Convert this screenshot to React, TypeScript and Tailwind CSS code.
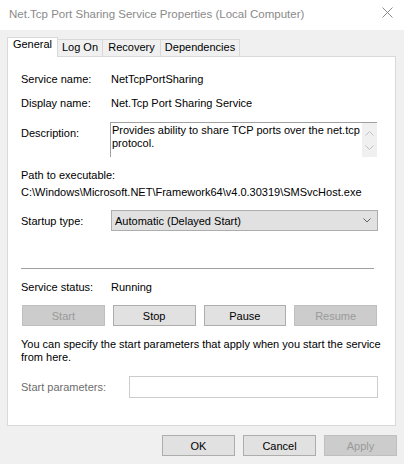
import React from "react";

function Btn({ label, disabled, w }: { label: string; disabled?: boolean; w?: string }) {
  return (
    <div
      className={
        "h-[21px] flex items-center justify-center border leading-[14px] " +
        (w ?? "") +
        " " +
        (disabled ? "bg-[#cccccc] border-[#bfbfbf] text-[#9a9a9a]" : "bg-[#e1e1e1] border-[#adadad] text-black")
      }
    >
      {label}
    </div>
  );
}

export default function App() {
  return (
    <div className="w-[404px] h-[464px] bg-[#f0f0f0] flex flex-col font-['Liberation_Sans',Arial,sans-serif] text-[11px] text-black overflow-hidden">
      {/* title bar */}
      <div className="h-[30px] bg-white flex items-start justify-between shrink-0">
        <span className="pl-[9px] mt-[6px] leading-[16px] text-[11.5px] text-[#8a8a8a] font-['Liberation_Sans',Arial,sans-serif]">
          Net.Tcp Port Sharing Service Properties (Local Computer)
        </span>
        <svg width="11" height="11" viewBox="0 0 11 11" className="mt-[7px] mr-[11px]">
          <path d="M0.5 0.5 L10.5 10.5 M10.5 0.5 L0.5 10.5" stroke="#8a8a8a" strokeWidth="1" fill="none" />
        </svg>
      </div>

      {/* tabs */}
      <div className="h-[26px] flex items-end pl-[7px] shrink-0">
        <div className="relative z-10 -mb-px w-[51px] h-[20px] bg-white border border-b-0 border-[#d9d9d9] text-center leading-[12px]">
          General
        </div>
        <div className="w-[45px] h-[17px] bg-[#f0f0f0] border-t border-r border-[#d9d9d9] text-center leading-[14px]">
          Log On
        </div>
        <div className="w-[58px] h-[17px] bg-[#f0f0f0] border-t border-r border-[#d9d9d9] text-center leading-[14px]">
          Recovery
        </div>
        <div className="w-[79px] h-[17px] bg-[#f0f0f0] border-t border-r border-[#d9d9d9] text-center leading-[14px]">
          Dependencies
        </div>
      </div>

      {/* panel */}
      <div className="ml-[7px] mr-[8px] h-[370px] bg-white border border-[#d9d9d9] flex flex-col pl-[13px] pr-[17px] shrink-0">
        <div className="mt-[15px] h-[14px] flex leading-[14px]">
          <span className="w-[90px]">Service name:</span>
          <span>NetTcpPortSharing</span>
        </div>
        <div className="mt-[10px] h-[14px] flex leading-[14px]">
          <span className="w-[90px]">Display name:</span>
          <span>Net.Tcp Port Sharing Service</span>
        </div>
        <div className="mt-[12px] flex items-start">
          <span className="w-[89px] mt-[4px] leading-[14px]">Description:</span>
          <div className="w-[267px] h-[35px] flex border-t border-l border-[#a0a0a0]">
            <div className="flex-1 pl-[1px] pt-[1px] leading-[13px]">
              Provides ability to share TCP ports over the net.tcp
              <br />
              protocol.
            </div>
            <div className="w-[15px] h-full bg-[#f0f0f0] flex flex-col items-center justify-between pt-[8px] pb-[7px]">
              <svg width="9" height="5" viewBox="0 0 9 5">
                <polyline points="0.5,4.5 4.5,0.5 8.5,4.5" stroke="#c0c0c0" strokeWidth="1" fill="none" />
              </svg>
              <svg width="9" height="5" viewBox="0 0 9 5">
                <polyline points="0.5,0.5 4.5,4.5 8.5,0.5" stroke="#c0c0c0" strokeWidth="1" fill="none" />
              </svg>
            </div>
          </div>
        </div>
        <div className="mt-[11px] h-[14px] leading-[14px]">Path to executable:</div>
        <div className="mt-[3px] h-[14px] leading-[14px] whitespace-nowrap">
          C:\Windows\Microsoft.NET\Framework64\v4.0.30319\SMSvcHost.exe
        </div>
        <div className="mt-[11px] h-[21px] flex items-center">
          <span className="w-[90px] leading-[14px]">Startup type:</span>
          <div className="w-[267px] h-[21px] bg-[#e1e1e1] border border-[#adadad] flex items-center justify-between pl-[3px] pr-[6px]">
            <span className="leading-[14px]">Automatic (Delayed Start)</span>
            <svg width="8" height="5" viewBox="0 0 8 5">
              <polyline points="0.5,0.5 4,4 7.5,0.5" stroke="#606060" strokeWidth="1" fill="none" />
            </svg>
          </div>
        </div>
        <div className="mt-[37px] h-px w-[353px] bg-[#a0a0a0]" />
        <div className="mt-[11px] h-[14px] flex leading-[14px]">
          <span className="w-[90px]">Service status:</span>
          <span>Running</span>
        </div>
        <div className="mt-[11px] ml-[1px] w-[355px] grid grid-cols-4 gap-[8px]">
          <Btn label="Start" disabled />
          <Btn label="Stop" />
          <Btn label="Pause" />
          <Btn label="Resume" disabled />
        </div>
        <div className="mt-[12px] leading-[13px] whitespace-nowrap">
          You can specify the start parameters that apply when you start the service
          <br />
          from here.
        </div>
        <div className="mt-[12px] h-[22px] flex items-center">
          <span className="w-[108px] leading-[14px] text-[#6d6d6d]">Start parameters:</span>
          <div className="w-[249px] h-[22px] bg-white border border-[#cccccc]" />
        </div>
      </div>

      {/* bottom buttons */}
      <div className="mt-[9px] flex justify-end gap-[8px] pr-[7px]">
        <Btn label="OK" w="w-[73px]" />
        <Btn label="Cancel" w="w-[73px]" />
        <Btn label="Apply" w="w-[73px]" disabled />
      </div>
    </div>
  );
}
